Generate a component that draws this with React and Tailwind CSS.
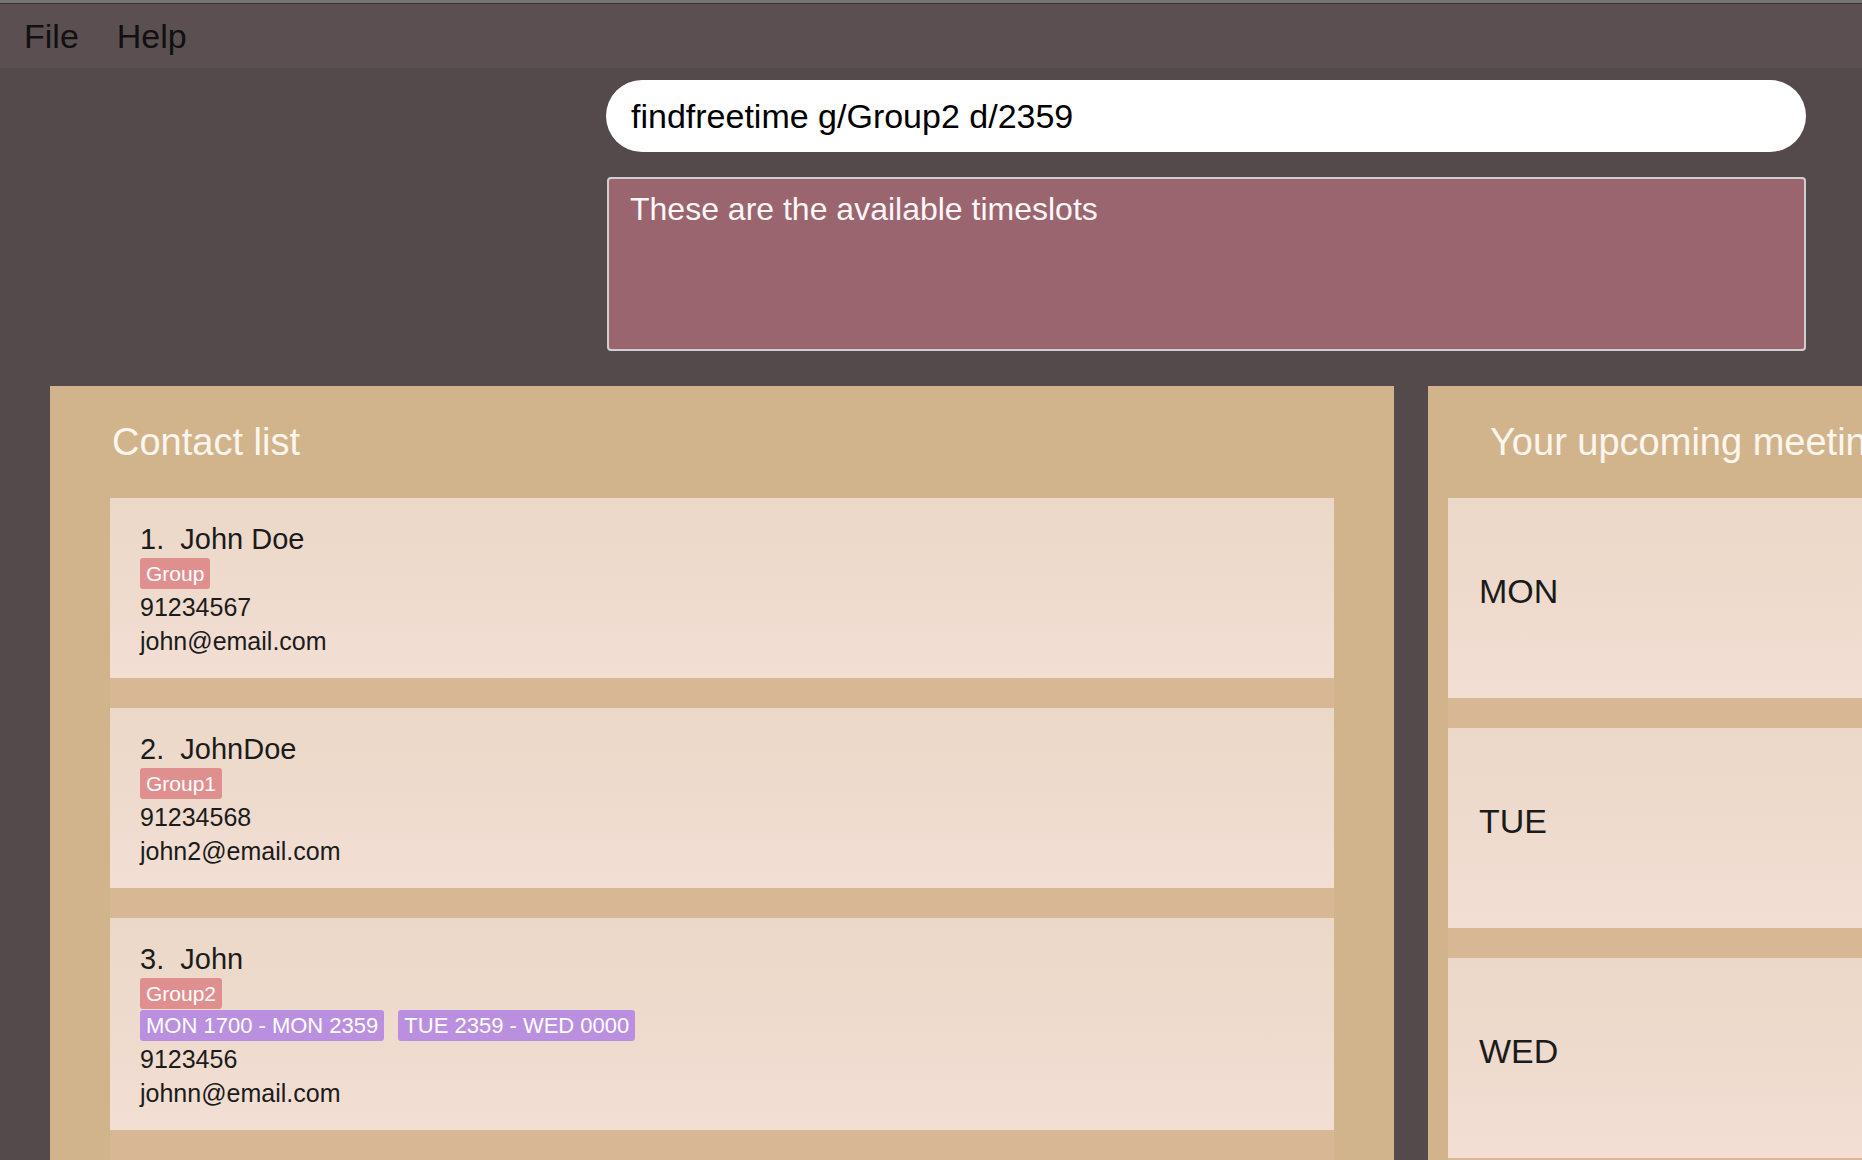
import React from 'react';

const contacts = [
  { name: 'John Doe', tags: ['Group'], slots: [], phone: '91234567', email: 'john@email.com' },
  { name: 'JohnDoe', tags: ['Group1'], slots: [], phone: '91234568', email: 'john2@email.com' },
  {
    name: 'John',
    tags: ['Group2'],
    slots: ['MON 1700 - MON 2359', 'TUE 2359 - WED 0000'],
    phone: '9123456',
    email: 'johnn@email.com'
  }
];

const days = ['MON', 'TUE', 'WED'];

function ContactCard({ index, contact }) {
  return (
    <div className="bg-linear-to-b from-[#ecd8c8] to-[#f2ded3] pl-[30px] pt-[23px] pb-[20px] text-[#1b1b1b]">
      <div className="text-[29px] leading-[36px] whitespace-pre">
        {index}.  {contact.name}
      </div>
      <div className="mt-[1px] flex gap-[15px]">
        {contact.tags.map((tag) => (
          <span key={tag} className="rounded-[3px] bg-[#e08f8f] px-[6px] text-[21px] leading-[31px] text-white">
            {tag}
          </span>
        ))}
      </div>
      {contact.slots.length > 0 && (
        <div className="mt-[1px] flex gap-[14px]">
          {contact.slots.map((slot) => (
            <span key={slot} className="rounded-[3px] bg-[#bb8fe0] px-[6px] text-[22px] leading-[31px] text-white whitespace-pre">
              {slot}
            </span>
          ))}
        </div>
      )}
      <div className="mt-[1px] text-[25px] leading-[34px]">{contact.phone}</div>
      <div className="text-[25px] leading-[34px]">{contact.email}</div>
    </div>
  );
}

export default function App() {
  return (
    <div className="flex h-[1160px] w-[1862px] flex-col overflow-hidden bg-[#544a4c] font-['Liberation_Sans',Arial,sans-serif]">
      <div className="h-[3px] bg-[#767474]" />
      <div className="h-[1px] bg-[#3a3434]" />
      <div className="flex h-[64px] items-center gap-[38px] bg-[#5b4f51] pl-[24px] text-[34px] text-[#111111]">
        <span>File</span>
        <span>Help</span>
      </div>

      <div className="pl-[606px] pr-[56px] pt-[12px]">
        <div className="flex h-[72px] items-center rounded-full bg-white pl-[25px] text-[34px] text-black">
          findfreetime g/Group2 d/2359
        </div>
        <div className="mt-[25px] ml-[1px] h-[174px] rounded-[4px] border-2 border-[#cfcfcf] bg-[#9b6570] pl-[21px] pt-[12px] text-[32px] leading-[37px] text-[#fdf7f7]">
          These are the available timeslots
        </div>
      </div>

      <div className="mt-[35px] flex min-h-0 flex-1 gap-[34px] pl-[50px]">
        <div className="flex w-[1344px] shrink-0 flex-col bg-[#d2b48c] px-[60px]">
          <div className="flex h-[112px] shrink-0 items-center pl-[2px] text-[38px] text-[#fdf6ee]">
            Contact list
          </div>
          <div className="flex flex-1 flex-col gap-[30px] bg-[#d7b794]">
            {contacts.map((c, i) => (
              <ContactCard key={c.name} index={i + 1} contact={c} />
            ))}
          </div>
        </div>

        <div className="flex w-[760px] shrink-0 flex-col bg-[#d2b48c] pl-[20px]">
          <div className="flex h-[112px] shrink-0 items-center pl-[42px] text-[38px] whitespace-nowrap text-[#fdf6ee]">
            Your upcoming meetings
          </div>
          <div className="flex flex-1 flex-col gap-[30px] bg-[#d7b794]">
            {days.map((d) => (
              <div
                key={d}
                className="flex h-[200px] shrink-0 items-center bg-linear-to-b from-[#ecd8c8] to-[#f2ded3] pb-[14px] pl-[31px] text-[34px] text-[#1b1b1b]"
              >
                {d}
              </div>
            ))}
          </div>
        </div>
      </div>
    </div>
  );
}
